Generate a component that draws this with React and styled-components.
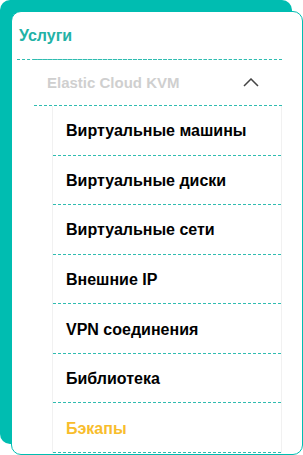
import React from 'react';
import styled, { createGlobalStyle } from 'styled-components';

const GlobalStyle = createGlobalStyle`
  html, body {
    margin: 0;
    padding: 0;
    background: #ffffff;
  }
  body {
    font-family: 'Liberation Sans', Arial, sans-serif;
  }
`;

const teal = '#00bdb1';
const dash = '#2fbcb0';

const Page = styled.div`
  padding: 11px 0 0 11px;
`;

const Card = styled.div`
  box-sizing: border-box;
  width: 292px;
  height: 444px;
  background: #ffffff;
  border: 1px solid ${teal};
  border-radius: 10px;
  box-shadow: -11px -11px 0 0 ${teal};
  overflow: hidden;
`;

const Content = styled.div`
  padding: 0 20px 0 5px;
`;

const Header = styled.div`
  box-sizing: border-box;
  height: 48px;
  display: flex;
  align-items: center;
  padding-left: 2px;
  border-bottom: 1px dashed ${dash};
  color: #22b2a6;
  font-size: 16px;
  font-weight: 700;
`;

const Group = styled.div`
  margin: -1px 0 0 17px;
  border-top: 1px dashed ${dash};
`;

const GroupHead = styled.div`
  box-sizing: border-box;
  height: 46px;
  display: flex;
  align-items: center;
  justify-content: space-between;
  padding: 0 23px 0 13px;
  border-bottom: 1px dashed ${dash};
  color: #cfcfcf;
  font-size: 15px;
  font-weight: 700;
`;

const SubList = styled.ul`
  list-style: none;
  margin: 0 0 0 18px;
  padding: 0;
  border-left: 1px solid #f1f1f1;
  border-right: 1px solid #f1f1f1;
`;

const Item = styled.li`
  box-sizing: border-box;
  height: 49.57px;
  display: flex;
  align-items: center;
  padding: 2px 0 0 13px;
  border-bottom: 1px dashed ${dash};
  color: ${({ active }) => (active ? '#f8bd2c' : '#000000')};
  font-size: 16px;
  font-weight: 700;
`;

const Chevron = () => (
  <svg width="16" height="9" viewBox="0 0 16 9" fill="none">
    <polyline points="1,8 8,1 15,8" stroke="#444" strokeWidth="1.5" />
  </svg>
);

const items = [
  'Виртуальные машины',
  'Виртуальные диски',
  'Виртуальные сети',
  'Внешние IP',
  'VPN соединения',
  'Библиотека',
  'Бэкапы',
];

const App = () => (
  <Page>
    <GlobalStyle />
    <Card>
      <Content>
        <Header>Услуги</Header>
        <Group>
          <GroupHead>
            Elastic Cloud KVM
            <Chevron />
          </GroupHead>
          <SubList>
            {items.map((name) => (
              <Item key={name} active={name === 'Бэкапы'}>
                {name}
              </Item>
            ))}
          </SubList>
        </Group>
      </Content>
    </Card>
  </Page>
);

export default App;
